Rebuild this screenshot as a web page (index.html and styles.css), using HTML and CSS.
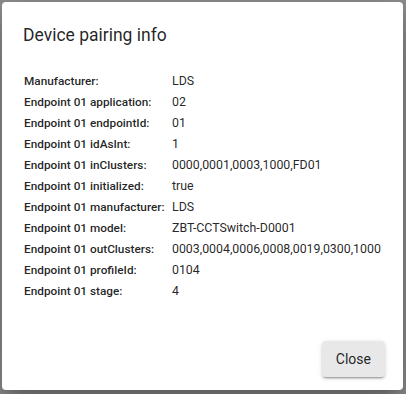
FILE: index.html
```html
<!DOCTYPE html>
<html>
<head>
<meta charset="utf-8">
<link rel="stylesheet" href="styles.css">
</head>
<body>
<div class="dialog">
  <h2 class="title">Device pairing info</h2>
  <div class="content">
    <div class="grid">
      <div class="k">Manufacturer:</div><div class="v">LDS</div>
      <div class="k">Endpoint 01 application:</div><div class="v">02</div>
      <div class="k">Endpoint 01 endpointId:</div><div class="v">01</div>
      <div class="k">Endpoint 01 idAsInt:</div><div class="v">1</div>
      <div class="k">Endpoint 01 inClusters:</div><div class="v">0000,0001,0003,1000,FD01</div>
      <div class="k">Endpoint 01 initialized:</div><div class="v">true</div>
      <div class="k">Endpoint 01 manufacturer:</div><div class="v">LDS</div>
      <div class="k">Endpoint 01 model:</div><div class="v">ZBT-CCTSwitch-D0001</div>
      <div class="k">Endpoint 01 outClusters:</div><div class="v">0003,0004,0006,0008,0019,0300,1000</div>
      <div class="k">Endpoint 01 profileId:</div><div class="v">0104</div>
      <div class="k">Endpoint 01 stage:</div><div class="v">4</div>
    </div>
  </div>
  <div class="actions">
    <button class="btn">Close</button>
  </div>
</div>
</body>
</html>
```
FILE: styles.css
```css
html, body {
  margin: 0;
  padding: 0;
  height: 100%;
}
body {
  background: #8e8e8e;
  font-family: Roboto, "Liberation Sans", sans-serif;
  color: rgba(0,0,0,0.87);
  padding: 2px 3px 4px 2px;
  box-sizing: border-box;
  display: flex;
}
.dialog {
  flex: 1;
  min-width: 0;
  background: #fff;
  border-radius: 4px;
  display: flex;
  flex-direction: column;
  box-shadow: 0 11px 15px -7px rgba(0,0,0,0.2), 0 24px 38px 3px rgba(0,0,0,0.14), 0 9px 46px 8px rgba(0,0,0,0.12);
}
.title {
  margin: 0;
  padding: 17px 21px 15px;
  font-size: 17.5px;
  font-weight: 400;
  line-height: 32px;
}
.content {
  flex: 1;
  padding: 5px 22px 0;
}
.grid {
  display: grid;
  grid-template-columns: 148px auto;
  line-height: 21px;
}
.k {
  font-size: 11.8px;
  font-weight: 500;
  white-space: nowrap;
}
.v {
  font-size: 12.35px;
  font-weight: 400;
  white-space: nowrap;
}
.actions {
  display: flex;
  justify-content: flex-end;
  padding: 0 18px 13px;
}
.btn {
  font-family: Roboto, "Liberation Sans", sans-serif;
  font-size: 14px;
  color: rgba(0,0,0,0.87);
  background: #e8e8e8;
  border: none;
  border-radius: 4px;
  height: 36px;
  padding: 0 14px;
  box-shadow: 0 3px 1px -2px rgba(0,0,0,0.2), 0 2px 2px 0 rgba(0,0,0,0.14), 0 1px 5px 0 rgba(0,0,0,0.12);
}
```
